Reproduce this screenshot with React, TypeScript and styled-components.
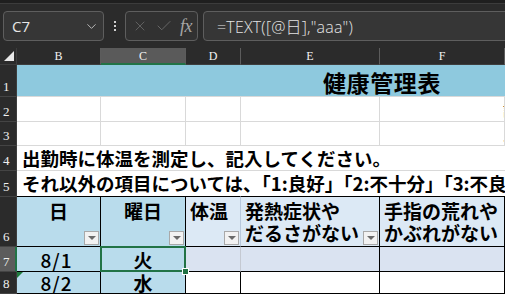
import React from 'react'
import styled, { createGlobalStyle } from 'styled-components'
import { ChevronDown, X, Check } from 'lucide-react'

const GlobalStyle = createGlobalStyle`
    html, body {
        margin: 0;
        padding: 0;
        background: #fff;
        overflow: hidden;
    }
    body {
        font-family: "Noto Sans CJK JP", "Noto Sans", sans-serif;
    }
`

const BLUE_TITLE = '#8ec9de'
const BLUE_KEY = '#b9dcec'
const BLUE_HEAD = '#dce9f5'
const BLUE_ROW = '#dae3f1'
const GRID = '#d9d9d9'
const GREEN = '#217346'

const columns = ['B', 'C', 'D', 'E', 'F']

export default function App() {
    return (
        <Frame>
            <GlobalStyle />
            <TopStrip />
            <Bar>
                <NameBox>
                    <span>C7</span>
                    <ChevronDown size={15} strokeWidth={1.4} color="#c9c9c9" />
                </NameBox>
                <Dots>
                    <i />
                    <i />
                    <i />
                </Dots>
                <FxBox>
                    <X size={16} strokeWidth={1.2} color="#6c6c6c" />
                    <Check size={18} strokeWidth={1.2} color="#6c6c6c" />
                    <Fx>fx</Fx>
                </FxBox>
                <Formula>=TEXT([@日],"aaa")</Formula>
            </Bar>

            <Sheet>
                <Corner>
                    <CornerMark />
                </Corner>
                {columns.map(c => (
                    <ColHead key={c} $active={c === 'C'}>{c}</ColHead>
                ))}

                <RowHead>1</RowHead>
                <TitleCell>健康管理表</TitleCell>

                <RowHead>2</RowHead>
                <Cell />
                <Cell />
                <Cell />
                <Cell />
                <Cell><Clipped>記入日</Clipped></Cell>

                <RowHead>3</RowHead>
                <Cell />
                <Cell />
                <Cell />
                <Cell />
                <Cell><Clipped>氏名</Clipped></Cell>

                <RowHead>4</RowHead>
                <NoteCell $line={GRID} $low>出勤時に体温を測定し、記入してください。</NoteCell>

                <RowHead>5</RowHead>
                <NoteCell $line="#000">それ以外の項目については、「1:良好」「2:不十分」「3:不良」を記入してください。</NoteCell>

                <RowHead>6</RowHead>
                <HeadCell $bg={BLUE_KEY} $center $right="#000">
                    日
                    <Filter />
                </HeadCell>
                <HeadCell $bg={BLUE_KEY} $center $right="#000">
                    曜日
                    <Filter />
                </HeadCell>
                <HeadCell $bg={BLUE_HEAD} $right="#b8c8dc">
                    体温
                    <Filter />
                </HeadCell>
                <HeadCell $bg={BLUE_HEAD} $right="#000">
                    発熱症状や<br />だるさがない
                    <Filter />
                </HeadCell>
                <HeadCell $bg={BLUE_HEAD} $right="#000">
                    手指の荒れや<br />かぶれがない
                </HeadCell>

                <RowHead $active>7</RowHead>
                <DataCell $bg={BLUE_KEY} $right="#000" $plain>8/1</DataCell>
                <DataCell $bg={BLUE_KEY} $right="#000">
                    火
                    <Selection />
                    <FillHandle />
                </DataCell>
                <DataCell $bg={BLUE_ROW} $right="#c4c9d2" />
                <DataCell $bg={BLUE_ROW} $right="#000" />
                <DataCell $bg={BLUE_ROW} $right="#000" />

                <RowHead>8</RowHead>
                <DataCell $bg={BLUE_KEY} $right="#000" $plain>
                    <ErrorMark />
                    8/2
                </DataCell>
                <DataCell $bg={BLUE_KEY} $right="#000">水</DataCell>
                <DataCell $right="#000" />
                <DataCell $right="#000" />
                <DataCell $right="#000" />
            </Sheet>
        </Frame>
    )
}

const Frame = styled.div`
    width: 505px;
    height: 294px;
    overflow: hidden;
    background: #fff;
`

const TopStrip = styled.div`
    height: 3px;
    background: #1f1f1f;
    border-bottom: 1px solid #3c3c3c;
`

const Bar = styled.div`
    height: 44px;
    box-sizing: border-box;
    background: #2b2b2b;
    display: flex;
    align-items: flex-start;
    padding: 7px 0 0 3px;
    font-family: "Open Sans", "Noto Sans CJK JP", sans-serif;
`

const Box = styled.div`
    height: 30px;
    box-sizing: border-box;
    border: 1px solid #5e5e5e;
    border-radius: 4px;
    background: #363636;
    display: flex;
    align-items: center;
`

const NameBox = styled(Box)`
    width: 101px;
    padding: 0 4px 0 8px;
    justify-content: space-between;
    color: #e6e6e6;
    font-size: 15px;
`

const Dots = styled.div`
    width: 21px;
    height: 30px;
    display: flex;
    flex-direction: column;
    align-items: center;
    justify-content: center;
    gap: 2px;
    i {
        width: 2px;
        height: 2px;
        background: #d0d0d0;
    }
`

const FxBox = styled(Box)`
    width: 73px;
    padding: 0 5px 0 6px;
    justify-content: space-between;
    background: #313131;
`

const Fx = styled.span`
    font-family: "Liberation Serif", serif;
    font-style: italic;
    font-size: 18px;
    color: #a6a6a6;
    letter-spacing: -0.5px;
`

const Formula = styled(Box)`
    flex: 1;
    margin: 0 -8px 0 5px;
    padding-left: 13px;
    color: #e4e4e4;
    font-size: 16px;
    font-weight: 300;
    letter-spacing: 0.2px;
`

const Sheet = styled.div`
    display: grid;
    grid-template-columns: 17px 84px 85px 55px 139px 125px;
    grid-template-rows: 17px 32px 25px 24px 25px 26px 50px 25px 22px;
    font-family: "Noto Sans CJK JP", sans-serif;
    color: #000;
`

const Corner = styled.div`
    background: #2b2b2b;
    border-right: 1px solid #3d3d3d;
    border-bottom: 1px solid #3d3d3d;
    box-sizing: border-box;
    display: flex;
    align-items: flex-end;
    justify-content: flex-end;
    padding: 0 2px 3px 0;
`

const CornerMark = styled.div`
    width: 0;
    height: 0;
    border-left: 10px solid transparent;
    border-bottom: 10px solid #e8e8e8;
`

const ColHead = styled.div<{ $active?: boolean }>`
    box-sizing: border-box;
    background: ${p => (p.$active ? '#5a5a5a' : '#2b2b2b')};
    border-right: 1px solid #5c5c5c;
    border-bottom: ${p => (p.$active ? `2px solid ${GREEN}` : '1px solid #3d3d3d')};
    color: #f2f2f2;
    font-family: "Liberation Serif", serif;
    font-size: 12px;
    display: flex;
    align-items: center;
    justify-content: center;
    padding-top: ${p => (p.$active ? '1px' : '0')};
`

const RowHead = styled.div<{ $active?: boolean }>`
    box-sizing: border-box;
    background: ${p => (p.$active ? '#5c5c5c' : '#2b2b2b')};
    border-right: ${p => (p.$active ? `2px solid ${GREEN}` : '1px solid #3d3d3d')};
    border-bottom: 1px solid #444;
    color: #f0f0f0;
    font-family: "Liberation Serif", serif;
    font-size: 13px;
    display: flex;
    align-items: flex-end;
    padding: 0 0 1px 3px;
`

const Cell = styled.div`
    box-sizing: border-box;
    border-right: 1px solid ${GRID};
    border-bottom: 1px solid ${GRID};
    overflow: hidden;
    display: flex;
    align-items: center;
`

const Clipped = styled.span`
    padding-left: 123px;
    white-space: nowrap;
    font-size: 15px;
    font-weight: 400;
`

const TitleCell = styled.div`
    grid-column: 2 / -1;
    background: ${BLUE_TITLE};
    border-bottom: 1px solid ${GRID};
    display: flex;
    align-items: center;
    padding: 3px 0 0 306px;
    font-size: 23px;
    font-weight: 700;
    letter-spacing: 0.6px;
    white-space: nowrap;
    overflow: hidden;
`

const NoteCell = styled.div<{ $line: string; $low?: boolean }>`
    grid-column: 2 / -1;
    box-sizing: border-box;
    border-bottom: 1px solid ${p => p.$line};
    display: flex;
    align-items: ${p => (p.$low ? 'flex-end' : 'center')};
    padding-left: 5px;
    font-size: 18.5px;
    font-weight: 700;
    line-height: 23px;
    white-space: nowrap;
    overflow: hidden;
`

const HeadCell = styled.div<{ $bg: string; $right: string; $center?: boolean }>`
    position: relative;
    box-sizing: border-box;
    background: ${p => p.$bg};
    border-top: 1px solid #000;
    border-right: 1px solid ${p => p.$right};
    border-bottom: 1px solid #000;
    margin-top: -1px;
    padding: 3px 0 0 ${p => (p.$center ? '0' : '4px')};
    text-align: ${p => (p.$center ? 'center' : 'left')};
    font-size: 19px;
    font-weight: 700;
    line-height: 22px;
    white-space: nowrap;
    overflow: hidden;
`

const Filter = styled.span`
    position: absolute;
    right: 1px;
    bottom: 1px;
    width: 15px;
    height: 14px;
    box-sizing: border-box;
    background: #f2f2f2;
    border: 1px solid #a9a9a9;
    display: flex;
    align-items: center;
    justify-content: center;
    &::after {
        content: '';
        border-left: 4px solid transparent;
        border-right: 4px solid transparent;
        border-top: 4px solid #6a6a6a;
    }
`

const DataCell = styled.div<{ $bg?: string; $right: string; $plain?: boolean }>`
    position: relative;
    box-sizing: border-box;
    background: ${p => p.$bg ?? '#fff'};
    border-right: 1px solid ${p => p.$right};
    border-bottom: 1px solid #000;
    display: flex;
    align-items: center;
    justify-content: center;
    font-size: 19px;
    font-weight: ${p => (p.$plain ? 500 : 700)};
    letter-spacing: ${p => (p.$plain ? '1px' : '0')};
    line-height: 1;
    padding-right: ${p => (p.$plain ? '4px' : '0')};
`

const Selection = styled.span`
    position: absolute;
    top: -1px;
    left: -1px;
    right: -1px;
    bottom: -1px;
    border: 2px solid ${GREEN};
    pointer-events: none;
`

const FillHandle = styled.span`
    position: absolute;
    right: -4px;
    bottom: -4px;
    width: 5px;
    height: 5px;
    background: ${GREEN};
    border: 1px solid #fff;
    z-index: 2;
`

const ErrorMark = styled.span`
    position: absolute;
    top: 0;
    left: 0;
    width: 0;
    height: 0;
    border-top: 6px solid #1e7b3c;
    border-right: 6px solid transparent;
`
